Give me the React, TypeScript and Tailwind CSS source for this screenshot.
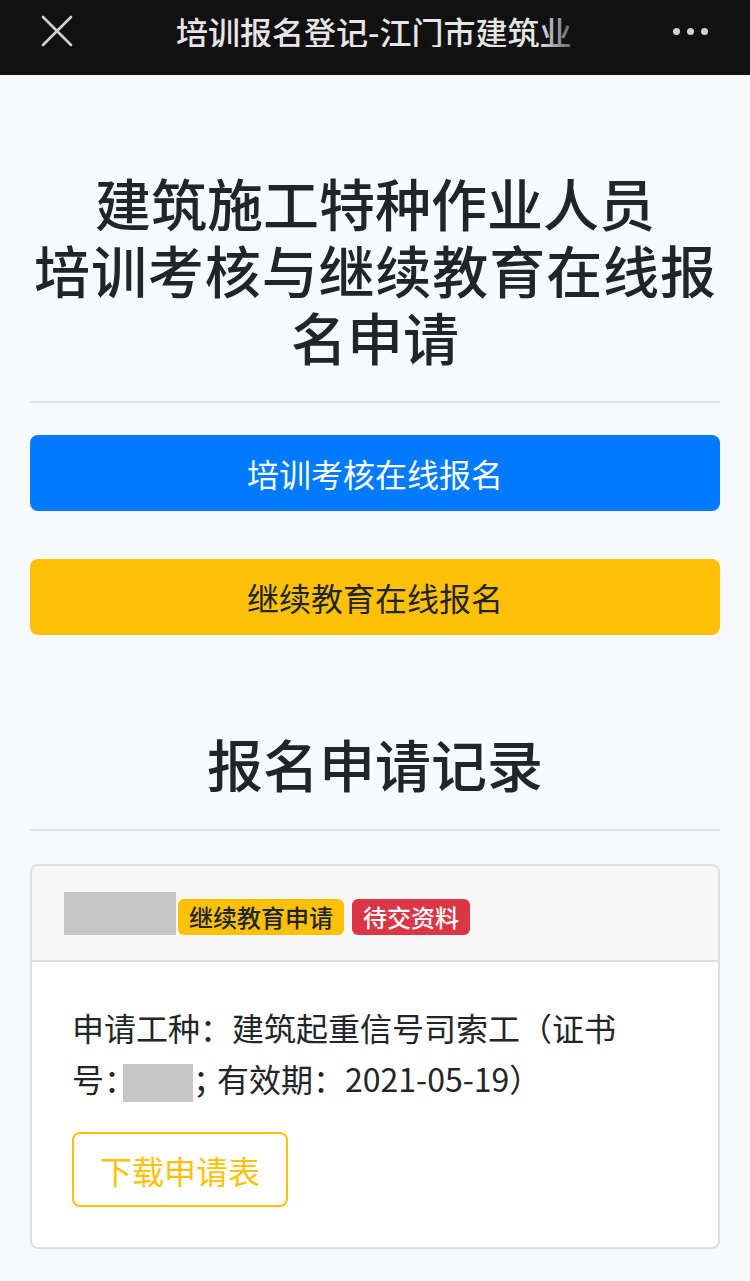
export default function App() {
	const font = { fontFamily: '"Noto Sans CJK SC", "Noto Sans", sans-serif' };

	return (
		<div className="min-h-[1281px] w-[750px] bg-[#f8f9fa] text-[#212529]" style={font}>
			{/* top bar */}
			<div className="h-[75px] bg-[#111111]">
				<div className="flex h-[62px] items-center px-[40px]">
					<svg width="34" height="34" viewBox="0 0 34 34" className="shrink-0">
						<path d="M3 3 L31 31 M31 3 L3 31" stroke="#d0d0d0" strokeWidth="2.6" strokeLinecap="round" />
					</svg>
					<div className="relative ml-[102px] w-[418px] overflow-hidden whitespace-nowrap text-[32px] font-medium leading-none text-[#e6e6e6]">
						培训报名登记-江门市建筑业
						<div className="absolute inset-y-0 right-0 w-[56px] bg-gradient-to-r from-transparent to-[#111111]" />
					</div>
					<div className="ml-auto flex items-center gap-[7px] pr-[2px]">
						<span className="h-[7px] w-[7px] rounded-full bg-[#d0d0d0]" />
						<span className="h-[7px] w-[7px] rounded-full bg-[#d0d0d0]" />
						<span className="h-[7px] w-[7px] rounded-full bg-[#d0d0d0]" />
					</div>
				</div>
			</div>

			<div className="px-[30px]">
				<h1 className="mt-[93px] px-[4px] text-justify text-[56px] font-medium leading-[67px] [text-align-last:center]">
					建筑施工特种作业人员
					<br />
					培训考核与继续教育在线报名申请
				</h1>
				<div className="mt-[32px] h-[2px] bg-[#e2e3e4]" />

				<button className="mt-[32px] flex h-[76px] w-full items-center justify-center rounded-[8px] bg-[#007bff] text-[32px] text-white">
					培训考核在线报名
				</button>
				<button className="mt-[48px] flex h-[76px] w-full items-center justify-center rounded-[8px] bg-[#ffc107] text-[32px] text-[#212529]">
					继续教育在线报名
				</button>

				<h2 className="mt-[94px] text-center text-[56px] font-medium leading-[67px]">报名申请记录</h2>
				<div className="mt-[33px] h-[2px] bg-[#e2e3e4]" />

				<div className="mt-[33px] overflow-hidden rounded-[8px] border-2 border-[#dfdfdf] bg-white">
					<div className="flex h-[96px] items-center border-b-2 border-[#dfdfdf] bg-[#f7f7f7] px-[32px]">
						<div className="flex items-end">
							<div className="h-[43px] w-[112px] bg-[#c6c6c6]" />
							<span className="ml-[2px] rounded-[6px] bg-[#ffc107] px-[11px] text-[24px] font-medium leading-[36px] text-[#212529]">
								继续教育申请
							</span>
							<span className="ml-[8px] rounded-[6px] bg-[#dc3545] px-[11px] text-[24px] font-medium leading-[36px] text-white">
								待交资料
							</span>
						</div>
					</div>
					<div className="px-[40px] pt-[40px] pb-[40px]">
						<p className="w-[560px] text-[32px] leading-[51px]">
							申请工种：建筑起重信号司索工（证书号
							<span className="inline-block h-[51px] w-[19px] overflow-hidden align-top">：</span>
							<span className="inline-block h-[38px] w-[70px] bg-[#c6c6c6] align-middle" />
							<span className="inline-block h-[51px] w-[24px] overflow-hidden align-top">；</span>
							有效期：2021-05-19）
						</p>
						<button className="mt-[28px] h-[75px] rounded-[8px] border-2 border-[#ffc107] px-[26px] text-[32px] text-[#ffc107]">
							下载申请表
						</button>
					</div>
				</div>
			</div>
		</div>
	);
}
